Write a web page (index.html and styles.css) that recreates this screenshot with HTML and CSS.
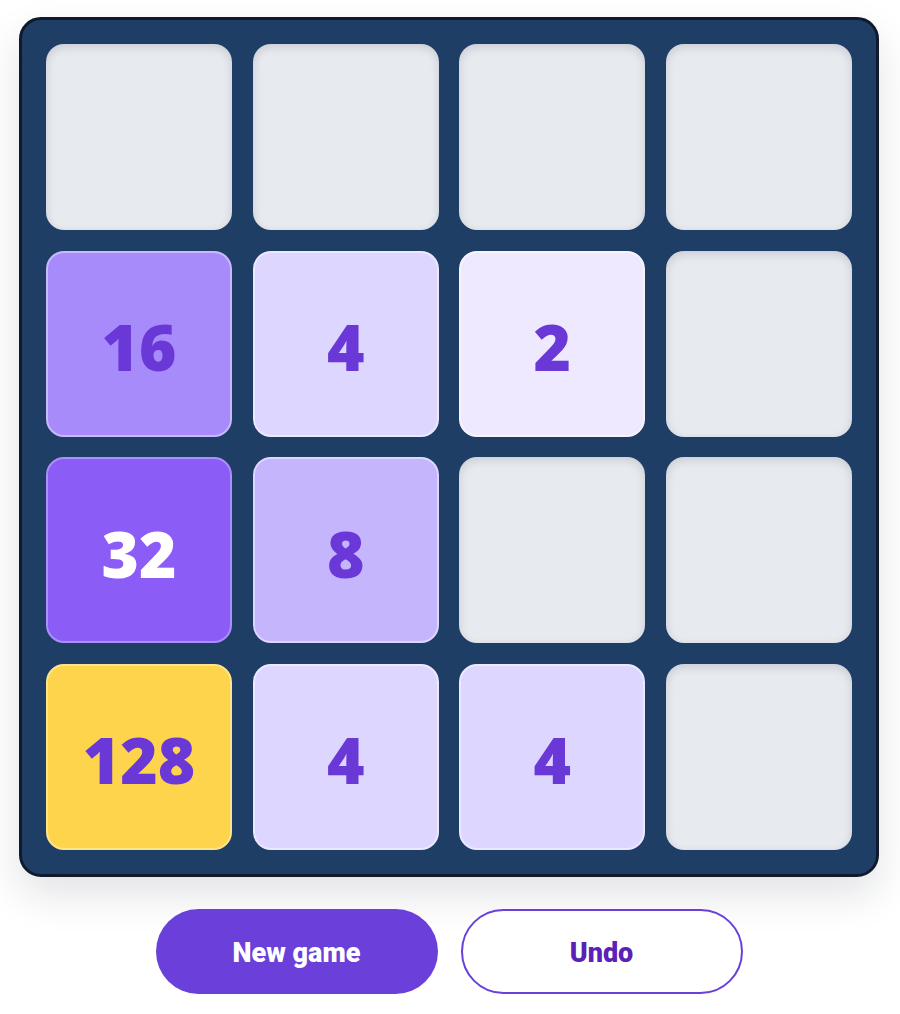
FILE: index.html
```html
<!DOCTYPE html>
<html lang="en">
<head>
    <meta charset="UTF-8">
    <meta name="viewport" content="width=device-width, initial-scale=1.0">
    <title>2048</title>
    <link rel="stylesheet" href="styles.css">
</head>
<body>
    <div class="game">
        <div class="board">
            <div class="tile empty"></div>
            <div class="tile empty"></div>
            <div class="tile empty"></div>
            <div class="tile empty"></div>

            <div class="tile t16">16</div>
            <div class="tile t4">4</div>
            <div class="tile t2">2</div>
            <div class="tile empty"></div>

            <div class="tile t32">32</div>
            <div class="tile t8">8</div>
            <div class="tile empty"></div>
            <div class="tile empty"></div>

            <div class="tile t128">128</div>
            <div class="tile t4">4</div>
            <div class="tile t4">4</div>
            <div class="tile empty"></div>
        </div>

        <div class="actions">
            <button class="btn primary">New game</button>
            <button class="btn outline">Undo</button>
        </div>
    </div>
</body>
</html>
```

FILE: styles.css
```css
* {
    margin: 0;
    padding: 0;
    box-sizing: border-box;
}

body {
    font-family: "Noto Sans", "Open Sans", sans-serif;
    background: #ffffff;
    min-height: 100vh;
}

.game {
    width: 860px;
    margin: 17px 0 0 19px;
    display: flex;
    flex-direction: column;
    align-items: center;
    gap: 32px;
}

.board {
    width: 860px;
    background: #1f3e66;
    border: 3px solid #111a2c;
    border-radius: 22px;
    padding: 24px;
    display: grid;
    grid-template-columns: repeat(4, 1fr);
    grid-auto-rows: 186px;
    gap: 20.6px;
    box-shadow: 0 18px 40px rgba(15, 23, 42, 0.12);
}

.tile {
    border-radius: 18px;
    display: flex;
    align-items: center;
    justify-content: center;
    padding-top: 6px;
    font-size: 64px;
    font-weight: 900;
    color: #6a38d6;
    border: 2px solid transparent;
}

.empty {
    background: #e7eaef;
    border: none;
    box-shadow: inset 0 3px 10px rgba(15, 23, 42, 0.14);
}

.t2 {
    background: #eee9ff;
    border-color: #f6f3ff;
}

.t4 {
    background: #ddd6fe;
    border-color: #ece8ff;
}

.t8 {
    background: #c4b5fd;
    border-color: #ddd6fe;
}

.t16 {
    background: #a78bfa;
    border-color: #c9b8fd;
}

.t32 {
    background: #8b5cf6;
    border-color: #ab8ffa;
    color: #ffffff;
}

.t128 {
    background: #fdd44c;
    border-color: #fde68a;
}

.actions {
    display: flex;
    gap: 23px;
}

.btn {
    width: 282px;
    height: 85px;
    border-radius: 43px;
    padding-top: 4px;
    font-family: Roboto, "Noto Sans", sans-serif;
    font-size: 27px;
    font-weight: 900;
    cursor: pointer;
}

.primary {
    background: #6b3fd9;
    color: #ffffff;
    border: none;
}

.outline {
    background: #ffffff;
    color: #5b21b6;
    border: 2px solid #6b3fd9;
}
```
